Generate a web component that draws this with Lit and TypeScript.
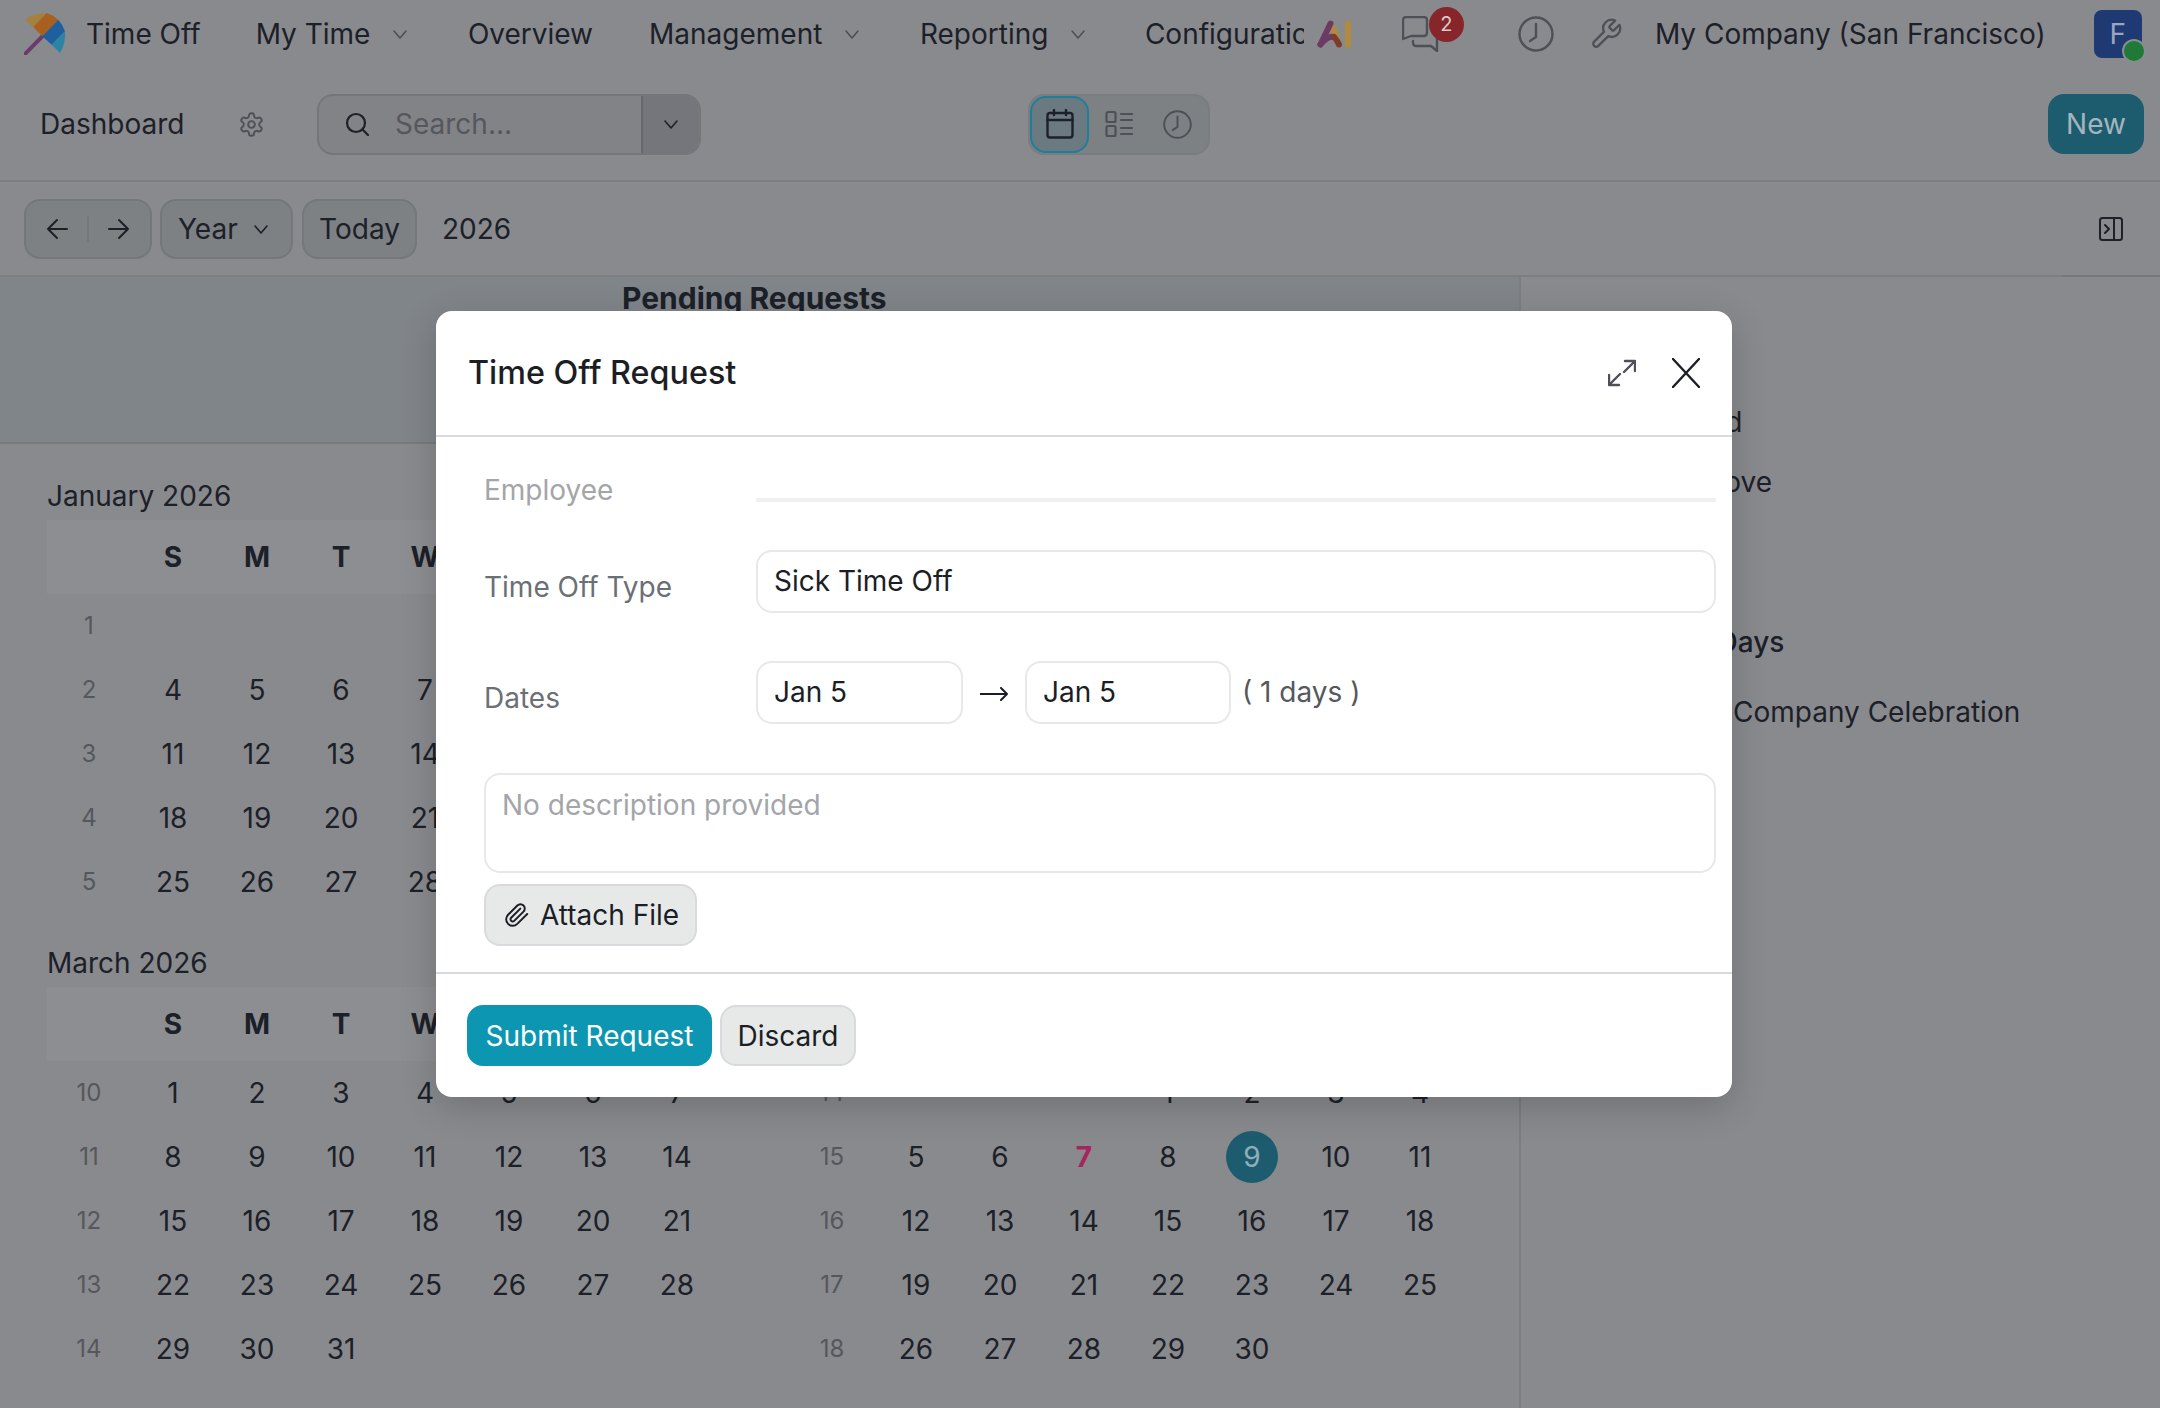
import { LitElement, html, css, svg } from 'lit';
import { customElement } from 'lit/decorators.js';

const icon = (w: number, h: number, vb: string, body: unknown, cls = '') => html`
  <svg class=${cls} width=${w} height=${h} viewBox=${vb} fill="none" stroke="currentColor" stroke-linecap="round" stroke-linejoin="round">${body}</svg>
`;

const chevron = (w = 16) => icon(w, w, '0 0 16 16', svg`<path d="M2 5l6 7 6-7" stroke-width="1.6"/>`, 'chev');
const clock = (s: number) => icon(s, s, '0 0 36 36', svg`<circle cx="18" cy="18" r="16.5" stroke-width="2.4"/><path d="M18 8v13l-6 4" stroke-width="2.4"/>`);

const MONTHS = [
  { name: 'January 2026', first: 4, days: 31, week: 1 },
  { name: 'February 2026', first: 0, days: 28, week: 5 },
  { name: 'March 2026', first: 0, days: 31, week: 10 },
  { name: 'April 2026', first: 3, days: 30, week: 14 },
];

@customElement('app-root')
export class AppRoot extends LitElement {
  static styles = css`
    :host {
      display: block;
      position: relative;
      width: 2160px;
      height: 1408px;
      overflow: hidden;
      background: #898a8d;
      color: #1c2028;
      font-family: Inter, 'Liberation Sans', sans-serif;
      font-size: 28px;
      line-height: 34px;
    }

    svg {
      display: block;
      flex: none;
    }

    .nav {
      display: flex;
      align-items: center;
      height: 70px;
      box-sizing: border-box;
      padding-bottom: 2px;
    }

    .logo {
      margin-left: 24px;
      margin-right: 20px;
    }

    .menu {
      display: flex;
      align-items: center;
      padding: 0 28px;
      white-space: nowrap;
    }

    .brand {
      padding: 0;
      margin-right: 27px;
    }

    .menu .chev {
      margin-left: 22px;
      margin-right: 3.5px;
      color: #4d5056;
    }

    .clipped {
      width: 159px;
      overflow: hidden;
      padding: 0;
      margin-left: 27px;
    }

    .ai {
      margin-left: 13px;
    }

    .chat {
      position: relative;
      margin-left: 51px;
      color: #4d5056;
    }

    .badge {
      position: absolute;
      left: 27px;
      top: -9px;
      width: 35px;
      height: 35px;
      border-radius: 50%;
      background: #86262a;
      color: #d9c9ca;
      font-size: 20px;
      line-height: 35px;
      text-align: center;
    }

    .nav-icon {
      color: #4d5056;
    }

    .company {
      margin-left: 32px;
      white-space: nowrap;
    }

    .avatar {
      position: relative;
      width: 48px;
      height: 48px;
      margin-left: 48px;
      border-radius: 8px;
      background: #1f3a73;
      color: #9aa6bd;
      line-height: 48px;
      text-align: center;
    }

    .status {
      position: absolute;
      right: -4px;
      bottom: -5px;
      width: 20px;
      height: 20px;
      border-radius: 50%;
      background: #1f7a38;
      border: 2px solid #8a8b8e;
    }

    .control {
      display: flex;
      align-items: center;
      height: 112px;
      box-sizing: border-box;
      padding: 0 0 2px 40px;
      border-bottom: 2px solid #7d7e82;
    }

    .crumb {
      width: 198px;
    }

    .gear {
      width: 79px;
      color: #4d5056;
    }

    .search {
      display: flex;
      align-items: center;
      width: 384px;
      height: 61px;
      box-sizing: border-box;
      border: 2px solid #74767a;
      border-radius: 16px;
      background: #828386;
      overflow: hidden;
    }

    .search .mag {
      margin-left: 26px;
      margin-right: 26px;
    }

    .placeholder {
      flex: 1;
      color: #55575c;
    }

    .search-drop {
      display: flex;
      align-items: center;
      justify-content: center;
      width: 58px;
      height: 100%;
      box-sizing: border-box;
      border-left: 2px solid #66686c;
      background: #75767b;
    }

    .switch {
      display: flex;
      align-items: center;
      width: 182px;
      height: 61px;
      box-sizing: border-box;
      margin-left: 327px;
      border-radius: 16px;
      border: 2px solid #797c80;
      background: #7d8184;
    }

    .view {
      display: flex;
      align-items: center;
      justify-content: center;
      width: 59px;
      height: 57px;
      box-sizing: border-box;
      color: #4d5056;
    }

    .view.active {
      border: 2px solid #1d7f99;
      border-radius: 16px;
      background: #6b7a80;
      color: #1c2028;
    }

    .new {
      margin-left: auto;
      margin-right: 16px;
      width: 96px;
      height: 60px;
      border-radius: 16px;
      background: #1d5c6e;
      color: #a3b6bd;
      line-height: 60px;
      text-align: center;
    }

    .pager {
      display: flex;
      align-items: center;
      height: 93px;
      padding-left: 24px;
      gap: 9px;
      border-bottom: 2px solid #7d7e82;
    }

    .btn {
      display: flex;
      align-items: center;
      height: 60px;
      box-sizing: border-box;
      border: 2px solid #74777b;
      border-radius: 16px;
      background: #7d8184;
    }

    .arrows {
      width: 128px;
      margin-right: -1px;
      justify-content: space-around;
      padding: 0 10px;
    }

    .sep {
      width: 2px;
      height: 26px;
      background: #74777b;
    }

    .year {
      width: 133px;
      padding-left: 16px;
      gap: 15px;
    }

    .today {
      width: 115px;
      justify-content: center;
    }

    .title-year {
      margin-left: 16px;
    }

    .panel-toggle {
      margin-left: auto;
      margin-right: 37px;
    }

    .content {
      display: flex;
    }

    .main {
      width: 1519px;
      flex: none;
      border-right: 2px solid #7d7e82;
    }

    .pending {
      height: 167px;
      box-sizing: border-box;
      padding: 4px 0 0 622px;
      border-bottom: 2px solid #777a7e;
      background: #80858a;
      font-size: 30px;
      font-weight: 700;
    }

    .months {
      display: grid;
      grid-template-columns: 672px 672px;
      grid-auto-rows: 467px;
      column-gap: 71px;
      padding: 35px 0 0 47px;
    }

    .month-title {
      height: 41px;
    }

    .cal {
      display: grid;
      grid-template-columns: repeat(8, 84px);
      grid-auto-rows: 64px;
      align-items: center;
      justify-items: center;
    }

    .head {
      grid-template-rows: 74px;
      background: #8d8e91;
      font-weight: 700;
    }

    .wk {
      color: #55575c;
      font-size: 24px;
    }

    .today-cell {
      width: 52px;
      height: 52px;
      border-radius: 50%;
      background: #1d5c6e;
      color: #8fb0bb;
      line-height: 52px;
      text-align: center;
    }

    .holiday {
      color: #a3265f;
      font-weight: 700;
    }

    .side {
      flex: 1;
    }

    .side-line {
      height: 2px;
      margin: -2px 0 0 541px;
      background: #76777b;
    }

    .legend {
      padding: 55px 0 0 99px;
    }

    .legend div {
      height: 60px;
      line-height: 60px;
    }

    .side-head {
      margin-top: 40px;
      padding-left: 44px;
      height: 60px;
      line-height: 60px;
      font-weight: 500;
    }

    .celebration {
      margin-top: 10px;
      padding-left: 99px;
      height: 60px;
      line-height: 60px;
      white-space: nowrap;
    }

    .celebration b {
      display: inline-block;
      width: 113px;
      font-weight: 400;
    }

    .modal {
      position: absolute;
      left: 436px;
      top: 311px;
      width: 1296px;
      border-radius: 16px;
      background: #fff;
      box-shadow: 0 10px 36px rgba(0, 0, 0, 0.18);
      color: #1b1e25;
    }

    .modal-head {
      display: flex;
      align-items: center;
      height: 124px;
      padding-left: 32px;
      border-bottom: 2px solid #d8dadd;
    }

    .modal-head h2 {
      flex: 1;
      margin: 0;
      font-size: 32.3px;
      font-weight: 500;
      line-height: 40px;
    }

    .expand {
      margin-right: 36px;
      color: #4d5056;
    }

    .close {
      margin-right: 32px;
    }

    .modal-body {
      padding: 36px 16px 26px 48px;
    }

    .row {
      display: flex;
    }

    .label {
      width: 272px;
      flex: none;
      color: #6b6f76;
    }

    .muted {
      color: #a3a5a9;
    }

    .employee {
      height: 29px;
      margin-bottom: 48px;
    }

    .line-field {
      flex: 1;
      height: 29px;
      box-sizing: border-box;
      border-bottom: 4px solid #eff0f0;
    }

    .input {
      display: flex;
      align-items: center;
      height: 63px;
      box-sizing: border-box;
      padding: 0 16px 2px;
      border: 2px solid #e7e8ea;
      border-radius: 16px;
    }

    .type {
      margin-bottom: 48px;
    }

    .type .label {
      padding-top: 20px;
    }

    .type .input {
      flex: 1;
    }

    .dates {
      margin-bottom: 49px;
      align-items: center;
    }

    .dates .label {
      padding-top: 10px;
    }

    .date {
      width: 207px;
    }

    .date.end {
      width: 206px;
    }

    .to {
      margin: 3px 17px 0;
    }

    .days {
      margin-left: 11px;
      padding-bottom: 2px;
      color: #55585e;
    }

    .textarea {
      height: 100px;
      box-sizing: border-box;
      padding: 13px 16px;
      border: 2px solid #e7e8ea;
      border-radius: 16px;
      color: #a3a5a9;
    }

    .m-btn {
      display: inline-flex;
      align-items: center;
      height: 61px;
      box-sizing: border-box;
      border: 2px solid #d8dadd;
      border-radius: 16px;
      background: #e7e9e9;
    }

    .attach {
      margin-top: 11px;
      width: 213px;
      height: 62px;
      padding-left: 18px;
      gap: 10px;
    }

    .modal-foot {
      display: flex;
      gap: 8px;
      padding: 31px;
      border-top: 2px solid #d8dadd;
    }

    .discard {
      width: 136px;
      justify-content: center;
    }

    .submit {
      width: 245px;
      justify-content: center;
      border-color: #0d96b2;
      background: #0d96b2;
      color: #fff;
    }
  `;

  renderMonth(m: (typeof MONTHS)[number]) {
    const cells: unknown[] = [];
    let day = 1 - m.first;
    let week = m.week;
    while (day <= m.days) {
      cells.push(html`<span class="wk">${week}</span>`);
      for (let i = 0; i < 7; i++, day++) {
        const shown = day >= 1 && day <= m.days;
        const april = m.week === 14;
        if (!shown) cells.push(html`<span></span>`);
        else if (april && day === 9) cells.push(html`<span class="today-cell">${day}</span>`);
        else if (april && day === 7) cells.push(html`<span class="holiday">${day}</span>`);
        else cells.push(html`<span>${day}</span>`);
      }
      week++;
    }
    return html`
      <div>
        <div class="month-title">${m.name}</div>
        <div class="cal head">
          <span></span>
          ${['S', 'M', 'T', 'W', 'T', 'F', 'S'].map((d) => html`<span>${d}</span>`)}
        </div>
        <div class="cal">${cells}</div>
      </div>
    `;
  }

  renderNav() {
    return html`
      <div class="nav">
        <svg class="logo" width="42" height="42" viewBox="0 0 42 42">
          <path d="M18.3 23.3L1 41" stroke="#6e3a6b" stroke-width="4" stroke-linecap="round" />
          <path d="M1 6.7Q10 0 22.7 0L9.3 14Z" fill="#a5803e" />
          <path d="M9.3 14L22.7 0Q29 2 34.3 6.7L18.3 23.3Z" fill="#a9601f" />
          <path d="M18.3 23.3L34.3 6.7Q39 12 41 18.3L27.7 31.7Z" fill="#1f5f9f" />
          <path d="M27.7 31.7L41 18.3Q42 30 36 40Z" fill="#2a85a5" />
        </svg>
        <div class="menu brand">Time Off</div>
        <div class="menu">My Time ${chevron()}</div>
        <div class="menu">Overview</div>
        <div class="menu">Management ${chevron()}</div>
        <div class="menu">Reporting ${chevron()}</div>
        <div class="menu clipped">Configuration</div>
        <svg class="ai" width="34" height="28" viewBox="0 0 34 28" fill="none" stroke-linecap="round">
          <path d="M13.5 3.5L20 17" stroke="#b08a3f" stroke-width="6" />
          <path d="M3.5 24.5L13.5 3.5" stroke="#6d3a66" stroke-width="6" />
          <path d="M3.5 24.5Q11 15 17 17" stroke="#6d3a66" stroke-width="6" />
          <path d="M17 17Q20 20 22 24.5" stroke="#7d3b2c" stroke-width="6" />
          <path d="M31 3.5V25" stroke="#b08a3f" stroke-width="6" />
        </svg>
        <div class="chat">
          ${icon(38, 36, '0 0 38 36', svg`<path d="M4 1h18a3 3 0 0 1 3 3v13a3 3 0 0 1-3 3H9l-8 3V4a3 3 0 0 1 3-3z" stroke-width="2.4"/><path d="M11 25v2a3 3 0 0 0 3 3h15l6 5V20" stroke-width="2.4"/>`)}
          <span class="badge">2</span>
        </div>
        <div class="nav-icon" style="margin-left:78px">${clock(36)}</div>
        <div class="nav-icon" style="margin-left:35px">
          ${icon(34, 34, '0 0 24 24', svg`<path d="M14.7 6.3a1 1 0 0 0 0 1.4l1.6 1.6a1 1 0 0 0 1.4 0l3.77-3.77a6 6 0 0 1-7.94 7.94l-6.91 6.91a2.12 2.12 0 0 1-3-3l6.91-6.91a6 6 0 0 1 7.94-7.94l-3.76 3.76z" stroke-width="1.6"/>`)}
        </div>
        <div class="company">My Company (San Francisco)</div>
        <div class="avatar">F<span class="status"></span></div>
      </div>
    `;
  }

  renderControl() {
    return html`
      <div class="control">
        <div class="crumb">Dashboard</div>
        <div class="gear">
          ${icon(27, 27, '0 0 24 24', svg`<path d="M12.22 2h-.44a2 2 0 0 0-2 2v.18a2 2 0 0 1-1 1.73l-.43.25a2 2 0 0 1-2 0l-.15-.08a2 2 0 0 0-2.73.73l-.22.38a2 2 0 0 0 .73 2.73l.15.1a2 2 0 0 1 1 1.72v.51a2 2 0 0 1-1 1.74l-.15.09a2 2 0 0 0-.73 2.73l.22.38a2 2 0 0 0 2.73.73l.15-.08a2 2 0 0 1 2 0l.43.25a2 2 0 0 1 1 1.73V20a2 2 0 0 0 2 2h.44a2 2 0 0 0 2-2v-.18a2 2 0 0 1 1-1.73l.43-.25a2 2 0 0 1 2 0l.15.08a2 2 0 0 0 2.73-.73l.22-.39a2 2 0 0 0-.73-2.73l-.15-.08a2 2 0 0 1-1-1.74v-.5a2 2 0 0 1 1-1.74l.15-.09a2 2 0 0 0 .73-2.73l-.22-.38a2 2 0 0 0-2.73-.73l-.15.08a2 2 0 0 1-2 0l-.43-.25a2 2 0 0 1-1-1.73V4a2 2 0 0 0-2-2z" stroke-width="1.7"/><circle cx="12" cy="12" r="3" stroke-width="1.7"/>`)}
        </div>
        <div class="search">
          ${icon(24, 24, '0 0 24 24', svg`<circle cx="11" cy="11" r="9" stroke-width="2.2"/><path d="M18 18l5 5" stroke-width="2.2"/>`, 'mag')}
          <span class="placeholder">Search...</span>
          <span class="search-drop">${chevron(16)}</span>
        </div>
        <div class="switch">
          <div class="view active">
            ${icon(28, 30, '0 0 28 30', svg`<rect x="1.5" y="4" width="25" height="24.5" rx="2.5" stroke-width="2.4"/><path d="M1.5 11h25M8 1v5M20 1v5" stroke-width="2.4"/>`)}
          </div>
          <div class="view">
            ${icon(28, 28, '0 0 28 28', svg`<rect x="1.5" y="2" width="9" height="10" rx="1.5" stroke-width="2.2"/><rect x="1.5" y="16" width="9" height="10" rx="1.5" stroke-width="2.2"/><path d="M16 4h11M16 10h11M16 18h11M16 24h11" stroke-width="2.2"/>`)}
          </div>
          <div class="view">${clock(29)}</div>
        </div>
        <div class="new">New</div>
      </div>
    `;
  }

  renderPager() {
    return html`
      <div class="pager">
        <div class="btn arrows">
          ${icon(22, 22, '0 0 22 22', svg`<path d="M21 11H2M11 2l-9 9 9 9" stroke-width="2"/>`)}
          <span class="sep"></span>
          ${icon(22, 22, '0 0 22 22', svg`<path d="M1 11h19M11 2l9 9-9 9" stroke-width="2"/>`)}
        </div>
        <div class="btn year">Year ${chevron()}</div>
        <div class="btn today">Today</div>
        <div class="title-year">2026</div>
        <div class="panel-toggle">
          ${icon(24, 24, '0 0 24 24', svg`<rect x="1" y="1" width="22" height="22" rx="2.5" stroke-width="2"/><path d="M15 1v22M6 8l4 4-4 4" stroke-width="2"/>`)}
        </div>
      </div>
    `;
  }

  renderModal() {
    return html`
      <div class="modal">
        <div class="modal-head">
          <h2>Time Off Request</h2>
          ${icon(28, 28, '0 0 28 28', svg`<path d="M17 2h10v10M27 2L16 13M11 26H1V16M1 26l11-11" stroke-width="2.4"/>`, 'expand')}
          ${icon(28, 30, '0 0 28 30', svg`<path d="M1 1l26 28M27 1L1 29" stroke-width="2.4"/>`, 'close')}
        </div>
        <div class="modal-body">
          <div class="row employee">
            <div class="label muted">Employee</div>
            <div class="line-field"></div>
          </div>
          <div class="row type">
            <div class="label">Time Off Type</div>
            <div class="input">Sick Time Off</div>
          </div>
          <div class="row dates">
            <div class="label">Dates</div>
            <div class="input date">Jan 5</div>
            <span class="to">
              ${icon(28, 14, '0 0 28 14', svg`<path d="M0 7h27M21 1l6 6-6 6" stroke-width="2"/>`)}
            </span>
            <div class="input date end">Jan 5</div>
            <span class="days">( 1 days )</span>
          </div>
          <div class="textarea">No description provided</div>
          <div class="m-btn attach">
            ${icon(26, 28, '0 0 24 24', svg`<path d="m21.44 11.05-9.19 9.19a6 6 0 0 1-8.49-8.49l8.57-8.57A4 4 0 1 1 18 8.84l-8.59 8.57a2 2 0 0 1-2.83-2.83l8.49-8.48" stroke-width="1.8"/>`)}
            Attach File
          </div>
        </div>
        <div class="modal-foot">
          <div class="m-btn submit">Submit Request</div>
          <div class="m-btn discard">Discard</div>
        </div>
      </div>
    `;
  }

  render() {
    return html`
      ${this.renderNav()} ${this.renderControl()} ${this.renderPager()}
      <div class="content">
        <div class="main">
          <div class="pending">Pending Requests</div>
          <div class="months">${MONTHS.map((m) => this.renderMonth(m))}</div>
        </div>
        <div class="side">
          <div class="side-line"></div>
          <div class="legend">
            <div>Legend</div>
            <div>Validated</div>
            <div>To Approve</div>
            <div>Refused</div>
          </div>
          <div class="side-head">Mandatory Days</div>
          <div class="celebration"><b>Apr 7</b>Company Celebration</div>
        </div>
      </div>
      ${this.renderModal()}
    `;
  }
}
